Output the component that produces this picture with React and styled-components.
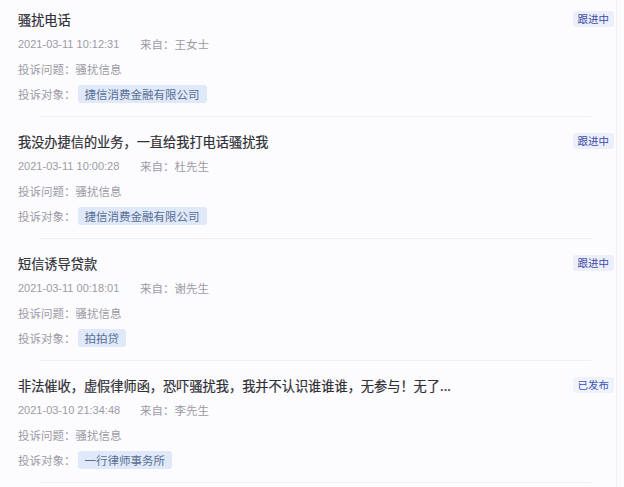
import styled, { createGlobalStyle } from "styled-components";

const Global = createGlobalStyle`
  html, body {
    margin: 0;
    padding: 0;
    background: #fcfbfe;
  }
  body {
    font-family: "Noto Sans CJK SC", "Noto Sans", sans-serif;
  }
`;

const List = styled.div`
  width: 617px;
  height: 487px;
  overflow: hidden;
  border-right: 1px solid #f1f0f5;
  box-sizing: border-box;
`;

const Item = styled.div`
  position: relative;
  padding: 12px 0 11px 18px;
  &:first-child {
    padding-top: 7px;
  }
  &::after {
    content: "";
    position: absolute;
    left: 40px;
    right: 25px;
    bottom: 0;
    height: 1px;
    background: #eeedf3;
  }
`;

const Head = styled.div`
  display: flex;
  align-items: center;
  justify-content: space-between;
  padding-right: 2px;
  height: 24px;
`;

const Title = styled.div`
  font-size: 13.2px;
  font-weight: 400;
  -webkit-text-stroke: 0.2px #303036;
  color: #303036;
  white-space: nowrap;
`;

const Status = styled.span`
  font-size: 10.5px;
  line-height: 16px;
  padding: 0 5px;
  border-radius: 3px;
  color: ${(p) => (p.done ? "#3a55b8" : "#3d4fa8")};
  background: ${(p) => (p.done ? "#f0f3fc" : "#eceef9")};
`;

const Line = styled.div`
  display: flex;
  align-items: center;
  height: 25px;
  font-size: 11.5px;
  color: #9c9ca4;
  white-space: nowrap;
`;

const Date = styled.span`
  font-family: "Liberation Sans", "Noto Sans CJK SC", sans-serif;
  font-size: 11px;
  width: 122px;
`;

const Tag = styled.span`
  margin-left: 2px;
  padding: 0 7px;
  line-height: 18px;
  border-radius: 3px;
  background: #dfe9fa;
  color: #5a6e92;
`;

const items = [
  { title: "骚扰电话", time: "2021-03-11 10:12:31", from: "王女士", issue: "骚扰信息", target: "捷信消费金融有限公司", status: "跟进中" },
  { title: "我没办捷信的业务，一直给我打电话骚扰我", time: "2021-03-11 10:00:28", from: "杜先生", issue: "骚扰信息", target: "捷信消费金融有限公司", status: "跟进中" },
  { title: "短信诱导贷款", time: "2021-03-11 00:18:01", from: "谢先生", issue: "骚扰信息", target: "拍拍贷", status: "跟进中" },
  { title: "非法催收，虚假律师函，恐吓骚扰我，我并不认识谁谁谁，无参与！无了...", time: "2021-03-10 21:34:48", from: "李先生", issue: "骚扰信息", target: "一行律师事务所", status: "已发布", done: true },
];

export default function App() {
  return (
    <>
      <Global />
      <List>
        {items.map((it) => (
          <Item key={it.time}>
            <Head>
              <Title>{it.title}</Title>
              <Status done={it.done}>{it.status}</Status>
            </Head>
            <Line>
              <Date>{it.time}</Date>
              来自：{it.from}
            </Line>
            <Line>投诉问题：{it.issue}</Line>
            <Line>
              投诉对象：<Tag>{it.target}</Tag>
            </Line>
          </Item>
        ))}
      </List>
    </>
  );
}
